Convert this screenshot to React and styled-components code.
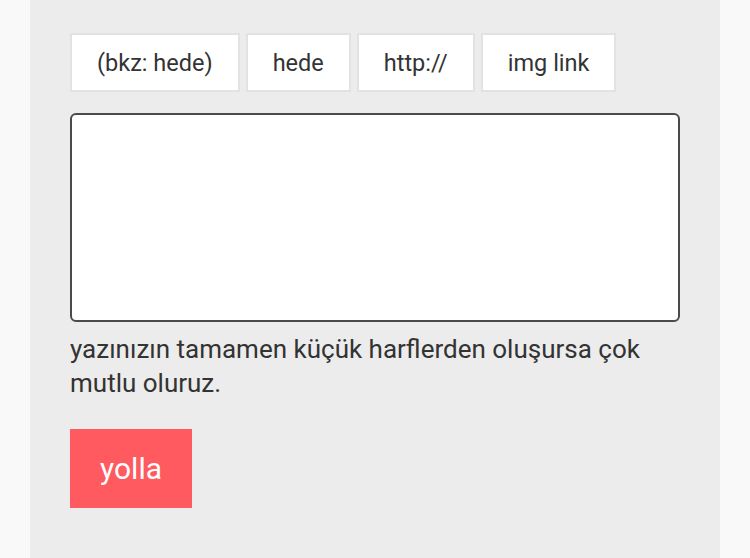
import React, { useState } from 'react';
import styled, { createGlobalStyle } from 'styled-components';

const GlobalStyle = createGlobalStyle`
  html, body {
    margin: 0;
    padding: 0;
    background: #f9f9f9;
    font-family: Roboto, "Noto Sans", sans-serif;
  }
`;

const Page = styled.div`
  display: flex;
  min-height: 100vh;
  padding-left: 30px;
  box-sizing: border-box;
`;

const Panel = styled.div`
  width: 690px;
  min-height: 100vh;
  background: #ececec;
  padding: 33px 40px 40px;
  box-sizing: border-box;
  display: flex;
  flex-direction: column;
`;

const Toolbar = styled.div`
  display: flex;
  gap: 6px;
`;

const ToolButton = styled.button`
  font-family: inherit;
  font-size: 23.5px;
  line-height: 27px;
  color: #333;
  background: #fff;
  border: 2px solid #e2e2e2;
  padding: 15px 25px 13px;
  cursor: pointer;
`;

const Entry = styled.textarea`
  margin-top: 21px;
  width: 610px;
  height: 209px;
  box-sizing: border-box;
  border: 2px solid #4a4a4a;
  border-radius: 6px;
  background: #fff;
  resize: none;
  font-family: inherit;
  font-size: 18px;
  padding: 8px;
  outline: none;
`;

const Hint = styled.p`
  margin: 10px 0 0;
  font-size: 26px;
  line-height: 34px;
  color: #333;
`;

const SendButton = styled.button`
  align-self: flex-start;
  margin-top: 29px;
  width: 122px;
  height: 79px;
  border: none;
  background: #ff5a5f;
  color: #fff;
  font-family: inherit;
  font-size: 30px;
  cursor: pointer;
`;

const tools = ['(bkz: hede)', 'hede', 'http://', 'img link'];

export default function App() {
  const [text, setText] = useState('');
  return (
    <>
      <GlobalStyle />
      <Page>
        <Panel>
          <Toolbar>
            {tools.map((t) => (
              <ToolButton key={t} type="button">{t}</ToolButton>
            ))}
          </Toolbar>
          <Entry value={text} onChange={(e) => setText(e.target.value)} />
          <Hint>yazınızın tamamen küçük harflerden oluşursa çok mutlu oluruz.</Hint>
          <SendButton type="button">yolla</SendButton>
        </Panel>
      </Page>
    </>
  );
}
